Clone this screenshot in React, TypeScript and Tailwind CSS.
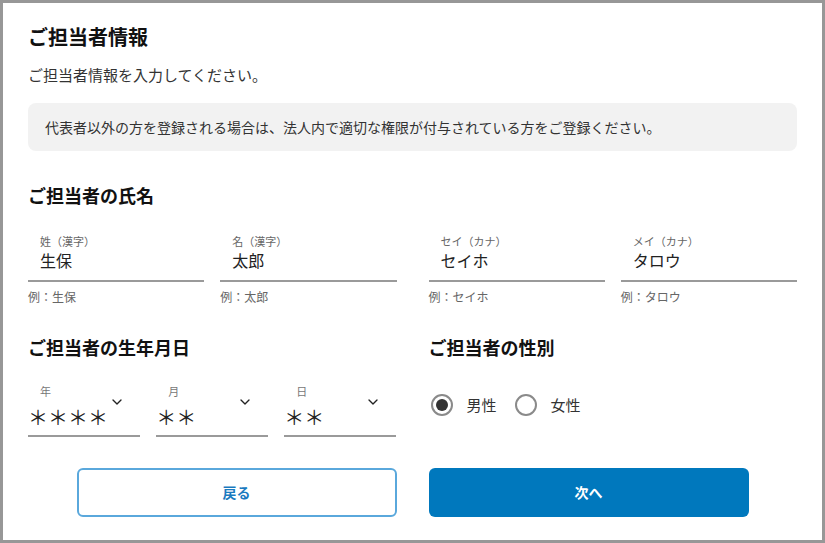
import { ChevronDown } from "lucide-react";

const font = { fontFamily: '"Noto Sans CJK JP", "Noto Sans", sans-serif' };

function NameField({ label, value, hint }: { label: string; value: string; hint: string }) {
  return (
    <div className="flex flex-col">
      <div className="flex flex-col px-3 pb-[9px] border-b-2 border-[#9a9a9a]">
        <span className="text-[11px] leading-[16px] text-[#666]">{label}</span>
        <span className="text-[16px] leading-[22px] text-[#222]">{value}</span>
      </div>
      <span className="mt-[7px] text-[12px] leading-[16px] text-[#666]">{hint}</span>
    </div>
  );
}

function DateSelect({ label, value }: { label: string; value: string }) {
  return (
    <div className="relative flex flex-col border-b-2 border-[#9a9a9a] pb-[4px]">
      <span className="pl-3 text-[11px] leading-[16px] text-[#777]">{label}</span>
      <span className="mt-[4px] text-[20px] leading-[28px] text-[#222]">{value}</span>
      <ChevronDown className="absolute right-[15px] top-[11px] text-[#222]" size={16} strokeWidth={2} />
    </div>
  );
}

function Radio({ checked, label }: { checked?: boolean; label: string }) {
  return (
    <div className="flex items-center gap-[14px]">
      <span className="flex h-[22px] w-[22px] items-center justify-center rounded-full border-2 border-[#8a8a8a]">
        {checked && <span className="h-[12px] w-[12px] rounded-full bg-[#333]" />}
      </span>
      <span className="text-[15px] leading-[22px] text-[#333]">{label}</span>
    </div>
  );
}

export default function App() {
  return (
    <div style={font} className="h-[543px] w-[825px] border-[3px] border-[#979797] bg-white px-[25px] pt-[21px]">
      <h1 className="text-[20px] font-bold leading-[26px] text-[#111]">ご担当者情報</h1>
      <p className="mt-[15px] text-[15px] leading-[20px] text-[#333]">ご担当者情報を入力してください。</p>

      <div className="mt-[18px] flex h-[48px] items-center rounded-lg bg-[#f2f2f2] px-[17px]">
        <span className="text-[14px] text-[#333]">
          代表者以外の方を登録される場合は、法人内で適切な権限が付与されている方をご登録ください。
        </span>
      </div>

      <h2 className="mt-[32px] text-[18px] font-bold leading-[24px] text-[#111]">ご担当者の氏名</h2>
      <div className="mt-[26px] grid grid-cols-2 gap-8">
        <div className="grid grid-cols-2 gap-4">
          <NameField label="姓（漢字）" value="生保" hint="例：生保" />
          <NameField label="名（漢字）" value="太郎" hint="例：太郎" />
        </div>
        <div className="grid grid-cols-2 gap-4">
          <NameField label="セイ（カナ）" value="セイホ" hint="例：セイホ" />
          <NameField label="メイ（カナ）" value="タロウ" hint="例：タロウ" />
        </div>
      </div>

      <div className="mt-[30px] grid grid-cols-2 gap-8">
        <div className="flex flex-col">
          <h2 className="text-[18px] font-bold leading-[24px] text-[#111]">ご担当者の生年月日</h2>
          <div className="mt-[24px] grid grid-cols-3 gap-4">
            <DateSelect label="年" value="＊＊＊＊" />
            <DateSelect label="月" value="＊＊" />
            <DateSelect label="日" value="＊＊" />
          </div>
        </div>
        <div className="flex flex-col">
          <h2 className="text-[18px] font-bold leading-[24px] text-[#111]">ご担当者の性別</h2>
          <div className="mt-[35px] flex items-center gap-[18px] pl-[2px]">
            <Radio checked label="男性" />
            <Radio label="女性" />
          </div>
        </div>
      </div>

      <div className="mt-[31px] grid grid-cols-2 gap-8">
        <button className="h-[49px] w-[320px] justify-self-end rounded-md border-2 border-[#5aa8dc] bg-white text-[14px] font-bold text-[#1a7abf]">
          戻る
        </button>
        <button className="h-[49px] w-[320px] rounded-md bg-[#0078bd] text-[14px] font-bold text-white">
          次へ
        </button>
      </div>
    </div>
  );
}
